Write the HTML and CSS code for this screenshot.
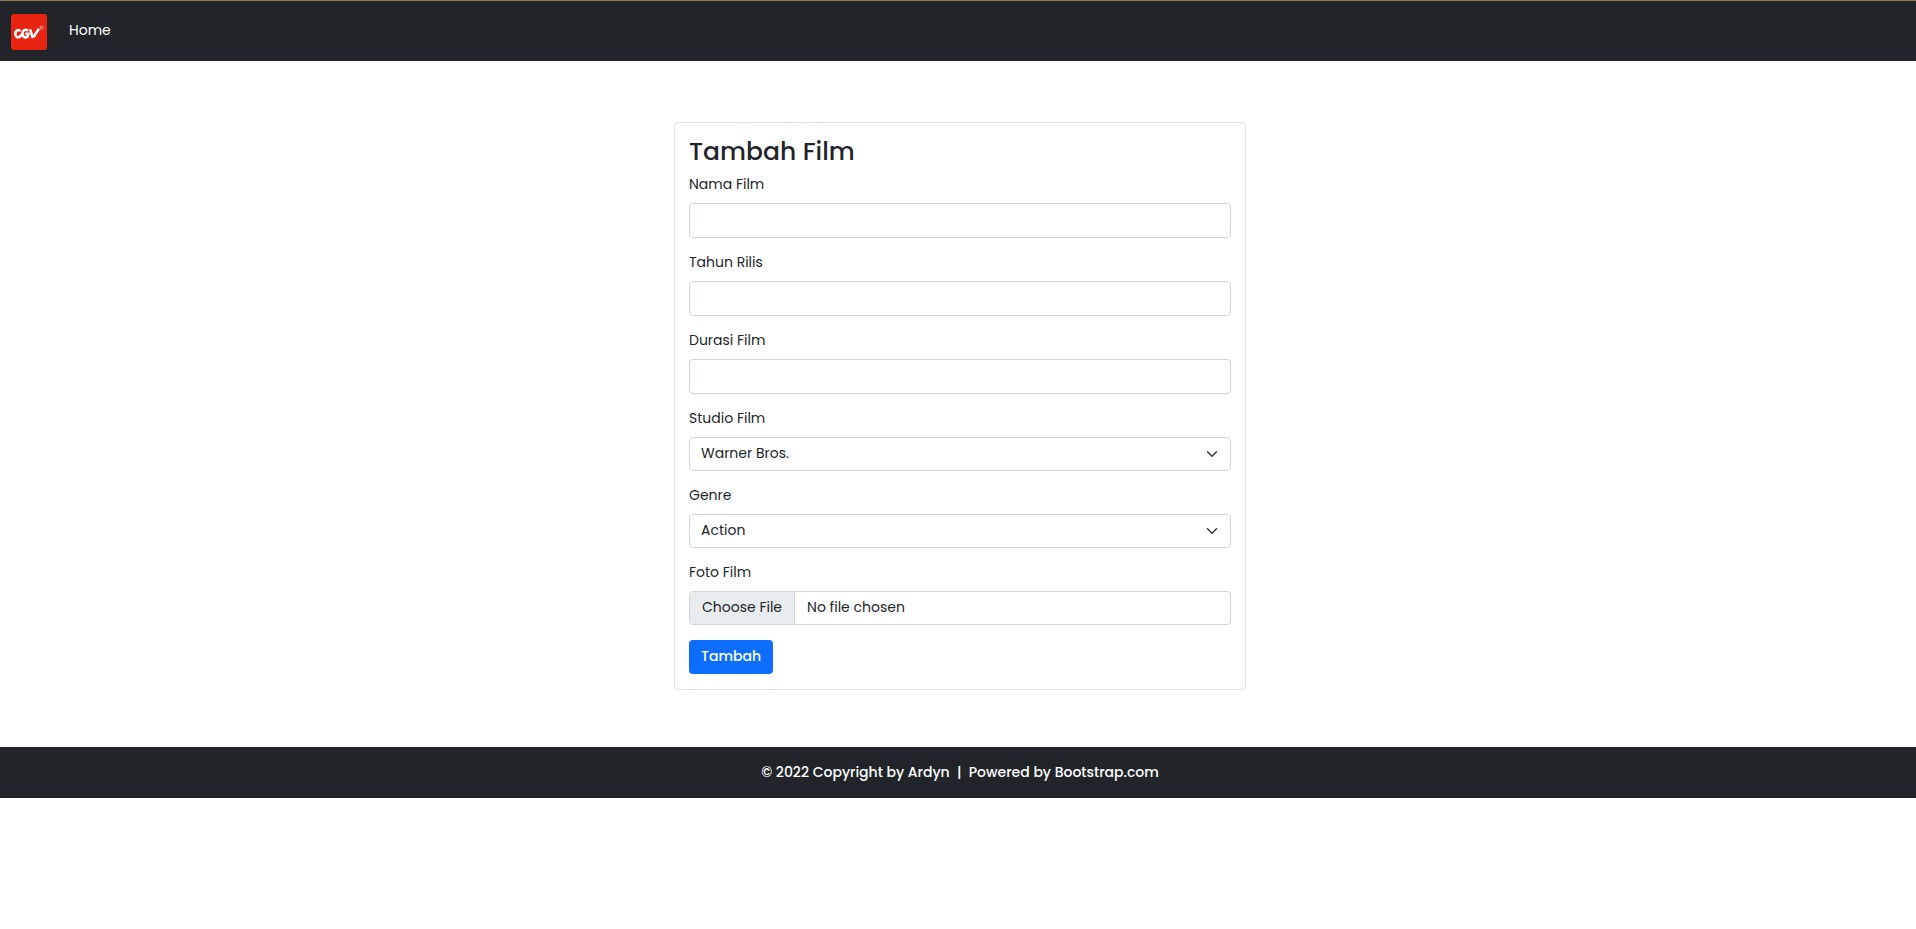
FILE: index.html
```html
<!DOCTYPE html>
<html lang="id">
<head>
<meta charset="utf-8">
<meta name="viewport" content="width=device-width, initial-scale=1">
<title>Tambah Film</title>
<link rel="stylesheet" href="styles.css">
</head>
<body>
<nav class="navbar">
  <a class="brand" href="#" aria-label="CGV">
    <svg class="logo" viewBox="0 0 36 36" aria-hidden="true">
      <rect width="36" height="36" rx="3" fill="#e82412"/>
      <g fill="none" stroke="#fff" stroke-width="2.600" stroke-linecap="round" stroke-linejoin="round">
        <path d="M8.600 16.300C6.400 15.200 4.300 17.200 4.300 19.700C4.300 22.700 6.700 24.100 9 22.700L11 20.300"/>
        <path d="M16.200 16.100C13.600 15 11.400 17 11.400 19.700C11.400 22.900 14 24.300 16.600 22.600L17.400 19.800H15.400"/>
        <path d="M19.400 16.300L21.400 22.900L23 22.300L27.300 15.700"/>
      </g>
      <circle cx="30.600" cy="13.600" r="1.400" fill="none" stroke="#fff" stroke-width=".8" opacity=".8"/>
    </svg>
  </a>
  <a class="nav-link" href="#">Home</a>
</nav>
<main class="content">
  <form class="card">
    <h1 class="card-title">Tambah Film</h1>
    <div class="field">
      <label for="nama">Nama Film</label>
      <input class="control" id="nama" type="text">
    </div>
    <div class="field">
      <label for="tahun">Tahun Rilis</label>
      <input class="control" id="tahun" type="text">
    </div>
    <div class="field">
      <label for="durasi">Durasi Film</label>
      <input class="control" id="durasi" type="text">
    </div>
    <div class="field">
      <label for="studio">Studio Film</label>
      <div class="select-wrap">
        <select class="control select" id="studio"><option>Warner Bros.</option></select>
        <svg class="chevron" viewBox="0 0 16 16" aria-hidden="true"><path d="m2 5 6 6 6-6"/></svg>
      </div>
    </div>
    <div class="field">
      <label for="genre">Genre</label>
      <div class="select-wrap">
        <select class="control select" id="genre"><option>Action</option></select>
        <svg class="chevron" viewBox="0 0 16 16" aria-hidden="true"><path d="m2 5 6 6 6-6"/></svg>
      </div>
    </div>
    <div class="field">
      <label for="foto">Foto Film</label>
      <input class="control file" id="foto" type="file">
    </div>
    <button class="submit" type="submit">Tambah</button>
  </form>
</main>
<footer class="footer">© 2022 Copyright by Ardyn &nbsp;|&nbsp; Powered by Bootstrap.com</footer>
</body>
</html>
```
FILE: styles.css
```css
* {
  box-sizing: border-box;
}

body {
  margin: 0;
  background: #fff;
  color: #212529;
  font-family: Poppins, Inter, "Noto Sans", sans-serif;
  font-size: 14px;
  line-height: 22px;
}

.navbar {
  display: flex;
  align-items: center;
  gap: 22px;
  padding: 13px 11px 11px;
  border-top: 1px solid #97794e;
  background: #212529;
}

.brand,
.logo {
  display: block;
  width: 36px;
  height: 36px;
}

.nav-link {
  padding-bottom: 4px;
  color: #fff;
  text-decoration: none;
}

.content {
  display: flex;
  justify-content: center;
  padding: 61px 0 57px 4px;
}

.card {
  width: 100%;
  max-width: 572px;
  padding: 14px 14px 15px;
  border: 1px solid #dfdfdf;
  border-radius: 4px;
}

.card-title {
  margin: 0 0 6px;
  font-size: 25px;
  font-weight: 500;
  line-height: 30px;
}

.field {
  display: flex;
  flex-direction: column;
  gap: 8px;
  margin-bottom: 13px;
}

.control {
  display: block;
  width: 100%;
  height: 35px;
  padding: 0 11px;
  border: 1px solid #ced4da;
  border-radius: 4px;
  background: #fff;
  color: #212529;
  font: inherit;
}

.select-wrap {
  position: relative;
}

.select {
  height: 34px;
  appearance: none;
  padding-bottom: 2px;
}

.chevron {
  position: absolute;
  top: 11px;
  right: 13px;
  width: 12px;
  height: 12px;
  fill: none;
  stroke: #343a40;
  stroke-width: 2;
  stroke-linecap: round;
  stroke-linejoin: round;
  pointer-events: none;
}

.file {
  height: 34px;
  padding: 0;
  overflow: hidden;
  line-height: 30px;
}

.file::file-selector-button {
  height: 32px;
  margin: 0 12px 0 0;
  padding: 0 12px 2px;
  border: 0;
  border-right: 1px solid #ced4da;
  background: #e9ecef;
  color: #212529;
  font: inherit;
}

.submit {
  display: block;
  height: 34px;
  margin-top: 15px;
  padding: 0 12px 2px;
  border: 0;
  border-radius: 4px;
  background: #0d6efd;
  color: #fff;
  font: inherit;
  font-weight: 500;
}

.footer {
  padding: 14px 0 15px 4px;
  background: #212529;
  color: #fff;
  font-weight: 500;
  text-align: center;
}
```
